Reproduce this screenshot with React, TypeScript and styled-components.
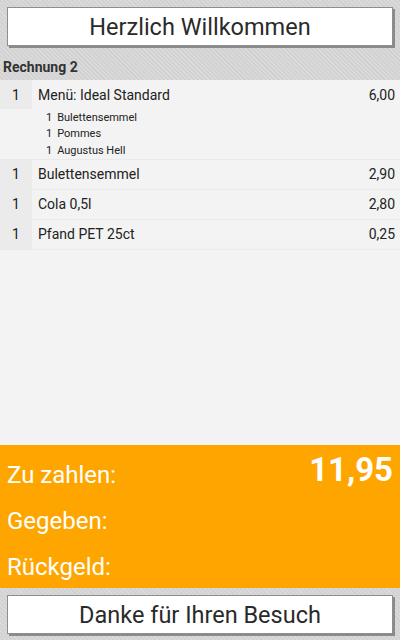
import styled, { createGlobalStyle } from "styled-components";

const GlobalStyle = createGlobalStyle`
  html, body {
    margin: 0;
    padding: 0;
  }
  body {
    font-family: Roboto, "Liberation Sans", sans-serif;
  }
  * {
    box-sizing: border-box;
  }
`;

// fine diagonal hatch used behind the buttons
const stripes = `
  background-color: #d6d6d6;
  background-image: repeating-linear-gradient(
    45deg,
    #dadada 0px,
    #dadada 1.5px,
    #d1d1d1 1.5px,
    #d1d1d1 3px
  );
`;

const Screen = styled.div`
  width: 400px;
  height: 640px;
  display: flex;
  flex-direction: column;
  overflow: hidden;
`;

const Header = styled.header`
  ${stripes}
  padding: 7px 7px 0;
  display: flex;
  flex-direction: column;
`;

const Footer = styled.footer`
  ${stripes}
  height: 52px;
  padding: 7px 7px 0;
`;

const BigButton = styled.button`
  width: 100%;
  height: 39px;
  background: #ffffff;
  border: 1px solid #8e8e8e;
  box-shadow: 2px 2px 0 #8a8a8a;
  font-family: Roboto, "Liberation Sans", sans-serif;
  font-size: 23.5px;
  color: #2a2a2a;
  padding: 0;
  cursor: pointer;
`;

const BillTitle = styled.div`
  height: 27px;
  margin: 7px -7px 0;
  padding: 0 3px;
  line-height: 28px;
  font-size: 14px;
  font-weight: 700;
  color: #333;
`;

const List = styled.ul`
  flex: 1;
  margin: 0;
  padding: 0;
  list-style: none;
  background: #f3f3f3;
`;

const Item = styled.li`
  border-bottom: 1px solid #eaeaea;
`;

const MainLine = styled.div`
  display: grid;
  grid-template-columns: 32px 1fr auto;
  height: 29px;
  align-items: stretch;
  font-size: 14px;
  color: #222;
`;

const Qty = styled.span`
  background: #ebebeb;
  display: flex;
  align-items: center;
  justify-content: center;
`;

const Name = styled.span`
  display: flex;
  align-items: center;
  padding-left: 6px;
`;

const Price = styled.span`
  display: flex;
  align-items: center;
  padding-right: 5px;
`;

const SubList = styled.div`
  padding: 0 0 0 46px;
  display: flex;
  flex-direction: column;
`;

const SubLine = styled.div`
  height: 16.5px;
  display: flex;
  align-items: center;
  gap: 5px;
  font-size: 11px;
  color: #222;
`;

const Summary = styled.section`
  height: 143px;
  background: #ffa500;
  padding: 7px 7px 0 7px;
  display: grid;
  grid-auto-rows: 46px;
  color: #ffffff;
`;

const SumRow = styled.div`
  display: flex;
  align-items: center;
  justify-content: space-between;
`;

const SumLabel = styled.span`
  font-size: 24px;
`;

const SumValue = styled.span`
  font-size: 33px;
  font-weight: 700;
  margin-top: -11px;
`;

interface IPosition {
  qty: number;
  name: string;
  price: string;
  parts?: { qty: number; name: string }[];
}

const positions: IPosition[] = [
  {
    qty: 1,
    name: "Menü: Ideal Standard",
    price: "6,00",
    parts: [
      { qty: 1, name: "Bulettensemmel" },
      { qty: 1, name: "Pommes" },
      { qty: 1, name: "Augustus Hell" },
    ],
  },
  { qty: 1, name: "Bulettensemmel", price: "2,90" },
  { qty: 1, name: "Cola 0,5l", price: "2,80" },
  { qty: 1, name: "Pfand PET 25ct", price: "0,25" },
];

const App = () => {
  return (
    <Screen>
      <GlobalStyle />
      <Header>
        <BigButton>Herzlich Willkommen</BigButton>
        <BillTitle>Rechnung 2</BillTitle>
      </Header>
      <List>
        {positions.map((pos, i) => (
          <Item key={i}>
            <MainLine>
              <Qty>{pos.qty}</Qty>
              <Name>{pos.name}</Name>
              <Price>{pos.price}</Price>
            </MainLine>
            {/* menu components, no own price */}
            {pos.parts && (
              <SubList>
                {pos.parts.map((part) => (
                  <SubLine key={part.name}>
                    <span>{part.qty}</span>
                    <span>{part.name}</span>
                  </SubLine>
                ))}
              </SubList>
            )}
          </Item>
        ))}
      </List>
      <Summary>
        <SumRow>
          <SumLabel>Zu zahlen:</SumLabel>
          <SumValue>11,95</SumValue>
        </SumRow>
        <SumRow>
          <SumLabel>Gegeben:</SumLabel>
        </SumRow>
        <SumRow>
          <SumLabel>Rückgeld:</SumLabel>
        </SumRow>
      </Summary>
      <Footer>
        <BigButton>Danke für Ihren Besuch</BigButton>
      </Footer>
    </Screen>
  );
};

export default App;
